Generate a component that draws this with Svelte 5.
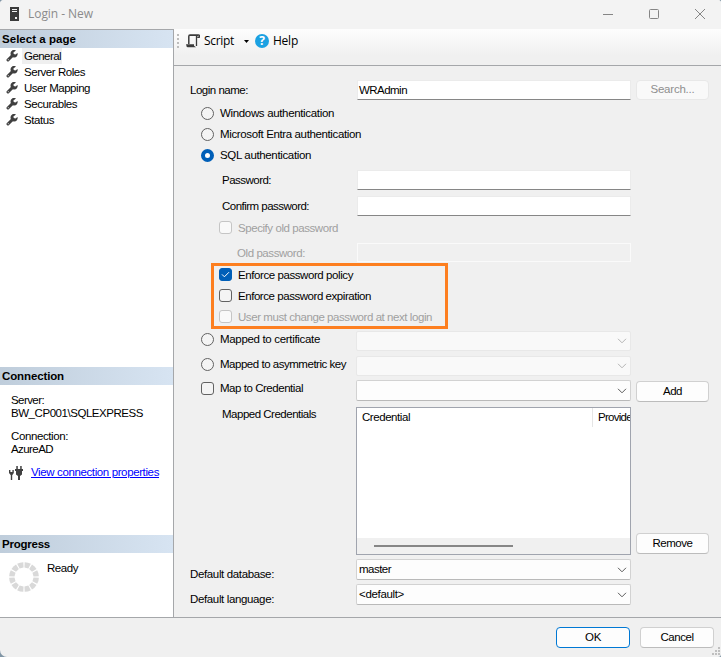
<script>
  const pages = [
    { name: 'General', w: 37 },
    { name: 'Server Roles', w: 61 },
    { name: 'User Mapping', w: 66 },
    { name: 'Securables', w: 53 },
    { name: 'Status', w: 30 }
  ];
  const segments = Array.from({ length: 12 }, (_, i) => i * 30 + 15);

  // Spread the glyphs of a label so that it fills the given advance width.
  function fit(node, width) {
    const natural = node.getBoundingClientRect().width;
    node.style.letterSpacing = `${(width - natural) / node.textContent.length}px`;
  }
</script>

{#snippet t(text, w)}<span class="t" use:fit={w}>{text}</span>{/snippet}

{#snippet chevron()}
  <svg class="chev" width="10" height="6" viewBox="0 0 10 6"><path d="M1 .8 5 4.8 9 .8" /></svg>
{/snippet}

{#snippet tick()}
  <svg width="9" height="7" viewBox="0 0 9 7"><path d="M1 3.4 3.4 5.8 8 1.2" fill="none" stroke="#fff" stroke-width="1" /></svg>
{/snippet}

<div class="backdrop">
  <div class="window">
    <header class="titlebar">
      <svg class="server" width="9" height="14" viewBox="0 0 9 14">
        <path d="M0 0h9v14H0z" fill="#3b3b3b" />
        <path d="M2 2.5h5M2 4.5h5" stroke="#f3f3f3" />
        <path d="M5 10h2v2H5z" fill="#f3f3f3" />
      </svg>
      <span class="title">{@render t('Login - New', 65)}</span>
      <svg class="wm" width="104" height="12" viewBox="0 0 104 12" fill="none" stroke="#858585">
        <path d="M1 6.5h10M93 1l10 10M103 1 93 11" />
        <rect x="47.5" y="1.5" width="9" height="9" rx="1" />
      </svg>
    </header>

    <div class="main">
      <aside>
        <h2>{@render t('Select a page', 74)}</h2>
        <ul>
          {#each pages as page, i}
            <li>
              <svg width="12" height="12" viewBox="0 0 12 12">
                <path d="M2 10 7 5" stroke="#404040" stroke-width="3" stroke-linecap="round" />
                <path d="M10 .6A3.4 3.4 0 0 0 4.6 4 3.4 3.4 0 0 0 8 7.4 3.4 3.4 0 0 0 11.5 3L9.4 4.6 7.6 4.2 7.4 2.6z" fill="#404040" />
                <path d="M1.8 9.7h1" stroke="#fff" stroke-width=".8" />
              </svg>
              <span class="page" class:current={i === 0}>{@render t(page.name, page.w)}</span>
            </li>
          {/each}
        </ul>

        <h2>{@render t('Connection', 62)}</h2>
        <div class="connection">
          <p>{@render t('Server:', 33)}<br />{@render t('BW_CP001\\SQLEXPRESS', 132)}</p>
          <p>{@render t('Connection:', 57)}<br />{@render t('AzureAD', 42)}</p>
          <div class="props">
            <svg width="14" height="14" viewBox="0 0 14 14" fill="#404040">
              <path d="M0 4h1.4v2h2V4h1.4v3L3.2 9.2V14H1.8V9.2L0 7z" />
              <path d="M6 3h8v2h-1v3.4L11 10v4H9v-4L7 8.400V5H6zM7.300 0h1.500v3H7.300zM11.200 0h1.500v3h-1.500z" />
            </svg>
            <a href="#props">{@render t('View connection properties', 128)}</a>
          </div>
        </div>

        <h2>{@render t('Progress', 48)}</h2>
        <div class="progress">
          <svg width="30" height="30" viewBox="-15 -15 30 30">
            {#each segments as a}
              <path d="M-3.200 -14.500Q0 -15.400 3.200 -14.500L2 -9.300H-2z" fill="#d9d9d9" transform="rotate({a})" />
            {/each}
          </svg>
          {@render t('Ready', 31)}
        </div>
      </aside>

      <section>
        <div class="toolbar">
          <svg class="grip" width="2" height="14" viewBox="0 0 2 14"><path d="M0 0h2v2H0zM0 4h2v2H0zM0 8h2v2H0zM0 12h2v2H0z" fill="#bcbcbc" /></svg>
          <svg class="scroll" width="14" height="14" viewBox="0 0 14 14" fill="none" stroke="#3c3c3c">
            <path d="M13.500 3.500V2q0-1-1-1H4Q2.800 1 2.800 2.500V10M4 1.200h8" stroke-width="1.500" />
            <path d="M10.500 2v10" stroke-width="1.300" />
            <path d="M0 10.200h8v1.500l2 1.500H2Q.3 13.200 0 10.200z" fill="#3c3c3c" stroke="none" />
            <path d="M11.200 2.500h2.500v1.600h-2.500z" fill="#3c3c3c" stroke="none" />
          </svg>
          {@render t('Script', 30)}
          <svg class="arrow" width="5" height="3" viewBox="0 0 5 3"><path d="M0 0h5L2.500 3z" /></svg>
          <span class="help">?</span>
          {@render t('Help', 25)}
        </div>

        <div class="form">
          <div class="row login">
            <span class="label">{@render t('Login name:', 58)}</span>
            <div class="input">{@render t('WRAdmin', 48)}</div>
            <div class="button off">{@render t('Search...', 44)}</div>
          </div>
          <div class="row opt"><i class="radio"></i>{@render t('Windows authentication', 114)}</div>
          <div class="row opt"><i class="radio"></i>{@render t('Microsoft Entra authentication', 141)}</div>
          <div class="row opt"><i class="radio on"></i>{@render t('SQL authentication', 91)}</div>
          <div class="row pass">
            <span class="label in">{@render t('Password:', 49)}</span>
            <div class="input"></div>
          </div>
          <div class="row confirm">
            <span class="label in">{@render t('Confirm password:', 87)}</span>
            <div class="input"></div>
          </div>
          <div class="row specify dim"><i class="check off"></i>{@render t('Specify old password', 100)}</div>
          <div class="row old dim">
            <span class="label in2">{@render t('Old password:', 68)}</span>
            <div class="input off"></div>
          </div>
          <div class="policy">
            <div><i class="check on">{@render tick()}</i>{@render t('Enforce password policy', 115)}</div>
            <div><i class="check"></i>{@render t('Enforce password expiration', 133)}</div>
            <div class="dim"><i class="check off"></i>{@render t('User must change password at next login', 194)}</div>
          </div>
          <div class="row map first">
            <span class="label opt"><i class="radio"></i>{@render t('Mapped to certificate', 100)}</span>
            <div class="select off">{@render chevron()}</div>
          </div>
          <div class="row map">
            <span class="label opt"><i class="radio"></i>{@render t('Mapped to asymmetric key', 126)}</span>
            <div class="select off">{@render chevron()}</div>
          </div>
          <div class="row map last">
            <span class="label opt"><i class="check"></i>{@render t('Map to Credential', 83)}</span>
            <div class="select">{@render chevron()}</div>
            <div class="button add">{@render t('Add', 19)}</div>
          </div>
          <div class="row creds">
            <span class="label in">{@render t('Mapped Credentials', 94)}</span>
            <div class="list">
              <div class="head">
                <span class="c1">{@render t('Credential', 48)}</span>
                <span class="c2">{@render t('Provider', 37)}</span>
              </div>
              <div class="hscroll"><i></i></div>
            </div>
            <div class="button">{@render t('Remove', 40)}</div>
          </div>
          <div class="row def">
            <span class="label">{@render t('Default database:', 84)}</span>
            <div class="select">{@render t('master', 32)}{@render chevron()}</div>
          </div>
          <div class="row def">
            <span class="label">{@render t('Default language:', 84)}</span>
            <div class="select">{@render t('<default>', 45)}{@render chevron()}</div>
          </div>
        </div>
      </section>
    </div>

    <footer>
      <div class="button ok">{@render t('OK', 16)}</div>
      <div class="button">{@render t('Cancel', 33)}</div>
      <svg class="resize" width="10" height="10" viewBox="0 0 10 10" fill="#bfbfbf">
        <path d="M7 0h2v2H7zM4 3h2v2H4zM7 3h2v2H7zM1 6h2v2H1zM4 6h2v2H4zM7 6h2v2H7z" />
      </svg>
    </footer>
  </div>
</div>

<style>
  :global(body) { margin: 0; }
  .backdrop { width: 721px; height: 657px; background: #8095a5; overflow: hidden; }
  .window {
    box-sizing: border-box; width: 721px; height: 657px; display: flex; flex-direction: column;
    background: #f0f0f0; color: #000; font: 11.5px/13px "Liberation Sans", Arial, sans-serif;
    border-radius: 4px 3px 3px 7px; overflow: hidden;
  }
  .t { white-space: pre; display: inline-block; }
  svg { display: block; flex: none; }
  h2, ul, p { margin: 0; padding: 0; }
  i { box-sizing: border-box; flex: none; }

  .titlebar { height: 29px; flex: none; display: flex; align-items: center; background: #f3f3f3; box-sizing: border-box; padding: 0 15px 2px 10px; }
  .title { margin-left: 9px; color: #8b8b8b; font: 12px/16px "Open Sans", "Noto Sans", sans-serif; }
  .server { margin-top: 1px; }
  .wm { margin-left: auto; }

  .main { height: 588px; flex: none; display: flex; border-bottom: 1px solid #a5a7aa; }
  aside { box-sizing: border-box; width: 174px; flex: none; display: flex; flex-direction: column; background: #fff; border: solid #a5a7aa; border-width: 1px 1px 0 0; }
  h2 { height: 18px; flex: none; padding-left: 2px; font-size: 11.5px; line-height: 18px; background: linear-gradient(90deg, #bfcddb, #d7e4f2); }
  ul { list-style: none; height: 319px; flex: none; }
  li { height: 16px; display: flex; align-items: center; padding-left: 6px; }
  .page { height: 16px; line-height: 16px; margin-left: 4px; padding: 0 1px 0 2px; }
  .current { background: #efefef; }
  .connection { height: 150px; flex: none; box-sizing: border-box; padding: 9px 0 0 11px; }
  .connection p { margin-bottom: 10px; height: 26px; }
  .props { display: flex; align-items: center; margin: -2px 0 0 -2px; }
  .props svg { margin-top: 2px; }
  a { color: #0000ff; margin-left: 8px; text-decoration: none; }
  a .t { text-decoration: underline; text-underline-offset: 1px; text-decoration-thickness: 1px; }
  .progress { display: flex; padding: 9px 0 0 9px; gap: 8px; }

  section { flex: 1; display: flex; flex-direction: column; }
  .toolbar {
    height: 37px; box-sizing: border-box; flex: none; display: flex; align-items: center; padding: 0 0 12px 3px;
    font: 12px/16px "Open Sans", "Noto Sans", sans-serif;
    background: linear-gradient(#fdfdfd, #f0f0f0 75%); border-bottom: 1px solid #a5a7aa;
  }
  .scroll { margin: 0 3px 0 7px; }
  .arrow { margin: 1px 6px 0 10px; }
  .toolbar .scroll + .t { margin-left: 1px; }
  .help { width: 14px; height: 14px; margin-right: 4px; border-radius: 50%; background: #1ba1e2; color: #fff; font: bold 12px/14px "Open Sans", sans-serif; text-align: center; }

  .form { padding: 13px 0 0 16px; display: flex; flex-direction: column; }
  .row { display: flex; align-items: center; height: 21px; }
  .label { width: 167px; flex: none; }
  .in { box-sizing: border-box; padding-left: 32px; }
  .in2 { box-sizing: border-box; padding-left: 47px; }
  .pass .label, .confirm .label, .old .label { padding-top: 2px; }
  .login { height: 22px; margin-bottom: 2px; }
  .opt { display: flex; align-items: center; gap: 6px; padding-left: 11px; }
  .label.opt { box-sizing: border-box; margin-top: -3px; }
  .last .label.opt { margin-top: -5px; }
  .pass { margin-top: 3px; }
  .confirm { margin-top: 5px; }
  .specify { margin-top: 1px; height: 20px; gap: 6px; padding-left: 29px; }
  .specify .t, .policy .t { padding-top: 1px; line-height: 14px; }
  .old { margin-top: 5px; height: 21px; }
  .dim { color: #a0a0a0; }

  .input { box-sizing: border-box; width: 274px; height: 20px; border: 1px solid #ebebeb; border-bottom-color: #868686; background: #fff; padding: 3px 1px; }
  .input.off { border-color: #fafafa; background: #f0f0f0; height: 19px; }
  .select { box-sizing: border-box; width: 275px; margin-left: -1px; height: 21px; display: flex; align-items: center; padding: 0 3px 0 2px; background: #fdfdfd; border: 1px solid #d2d2d2; border-bottom-color: #b9b9b9; border-radius: 2px; }
  .select.off { height: 20px; background: #f9f9f9; border-color: #e8e8e8; }
  .chev { margin-left: auto; fill: none; stroke: #5a5a5a; }
  .off .chev { stroke: #b4b4b4; }
  .button { box-sizing: border-box; width: 73px; height: 21px; margin-left: 5px; display: flex; align-items: center; justify-content: center; background: #fdfdfd; border: 1px solid #d0d0d0; border-bottom-color: #bcbcbc; border-radius: 4px; }
  .button.off { height: 20px; margin-bottom: 1px; color: #8f8f8f; background: #f9f9f9; border-color: #e8e8e8; }
  .button.add { margin-top: 2px; }

  .radio, .check { width: 13px; height: 13px; border: 1px solid #626262; background: #f4f4f4; }
  .radio { border-radius: 50%; }
  .radio.on { border: 4px solid #005fb8; background: #fff; }
  .check { border-radius: 3px; display: flex; align-items: center; justify-content: center; }
  .check.on { background: #005fb8; border-color: #005fb8; }
  .check.off { border-color: #c5c5c5; background: #f9f9f9; }

  .policy { box-sizing: border-box; width: 237px; height: 66px; margin-left: 21px; padding-left: 5px; border: 3px solid #fd7f20; display: flex; flex-direction: column; gap: 4px; }
  .policy div { height: 17px; display: flex; align-items: center; gap: 6px; }
  .map { margin-bottom: 4px; }
  .map.first { margin-top: 1px; }
  .creds { height: 148px; margin-top: 2px; align-items: flex-start; }
  .creds .label { padding-top: 1px; }
  .list { box-sizing: border-box; width: 275px; margin-left: -1px; height: 148px; border: 1px solid #a0a4ae; background: #fff; display: flex; flex-direction: column; overflow: hidden; }
  .head { height: 19px; display: flex; line-height: 19px; }
  .c1 { box-sizing: border-box; width: 236px; flex: none; padding-left: 5px; border-right: 1px solid #e5e5e5; }
  .c2 { width: 37px; overflow: hidden; padding-left: 5px; box-sizing: border-box; white-space: nowrap; }
  .hscroll { height: 16px; margin-top: auto; background: #f0f0f0; padding: 7px 0 0 17px; box-sizing: border-box; }
  .hscroll i { display: block; width: 139px; height: 2px; background: #868686; }
  .creds .button { align-self: flex-end; margin-bottom: 1px; }
  .def { margin-top: 4px; }
  .def .label { padding-top: 9px; }

  footer { flex: 1; display: flex; position: relative; padding-top: 9px; justify-content: flex-end; padding-right: 7px; }
  footer .button { width: 74px; margin-left: 10px; }
  footer .ok { border-color: #0078d4; }
  .resize { position: absolute; right: 0; bottom: 0; }
</style>
